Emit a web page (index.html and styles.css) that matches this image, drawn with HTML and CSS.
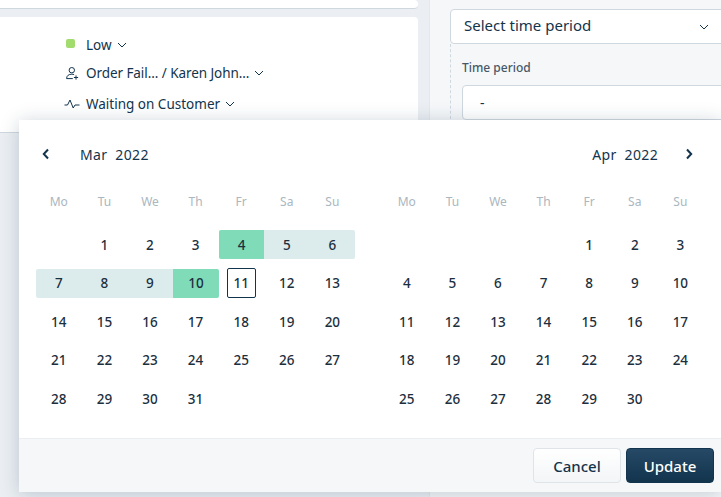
FILE: index.html
```html
<!DOCTYPE html>
<html lang="en">
<head>
<meta charset="utf-8">
<title>Date range picker</title>
<link rel="stylesheet" href="styles.css">
</head>
<body>
<div class="page">
  <main class="main">
    <div class="card card-top"></div>
    <div class="card card-props">
      <div class="prop prop-low">
        <span class="prop-icon"><span class="swatch"></span></span>
        <span>Low</span>
        <svg class="chev" viewBox="0 0 10 6"><path d="M1 1l4 4 4-4"/></svg>
      </div>
      <div class="prop prop-agent">
        <span class="prop-icon">
          <svg class="ico" viewBox="0 0 13 13"><circle cx="5.8" cy="3.2" r="2.7"/><path d="M.6 11.6c0-3 2.2-4.4 5.2-4.4.9 0 1.6.1 2.3.4M.6 11.6h6.2M10 8.4v4.2M7.9 10.5h4.2"/></svg>
        </span>
        <span class="prop-agent-text">Order Fail... / Karen John...</span>
        <svg class="chev" viewBox="0 0 10 6"><path d="M1 1l4 4 4-4"/></svg>
      </div>
      <div class="prop prop-status">
        <span class="prop-icon">
          <svg class="ico ico-wide" viewBox="0 0 16 10"><path d="M.5 6h3L6 1l3.2 8L11 6h4.5"/></svg>
        </span>
        <span>Waiting on Customer</span>
        <svg class="chev" viewBox="0 0 10 6"><path d="M1 1l4 4 4-4"/></svg>
      </div>
    </div>
  </main>
  <aside class="side">
    <div class="select">
      <span>Select time period</span>
      <svg class="chev" viewBox="0 0 10 6"><path d="M1 1l4 4 4-4"/></svg>
    </div>
    <div class="period">
      <div class="period-label">Time period</div>
      <div class="period-input">-</div>
    </div>
  </aside>
</div>

<section class="picker">
  <div class="calendars">
    <div class="month">
      <div class="month-head">
        <svg class="nav" viewBox="0 0 8 12"><path d="M6 1.5L1.8 6 6 10.5"/></svg>
        <span class="month-name">Mar&nbsp; 2022</span>
      </div>
      <div class="grid">
        <div class="dow">Mo</div><div class="dow">Tu</div><div class="dow">We</div><div class="dow">Th</div><div class="dow">Fr</div><div class="dow">Sa</div><div class="dow">Su</div>
        <div class="day"></div><div class="day">1</div><div class="day">2</div><div class="day">3</div><div class="day edge start">4</div><div class="day range">5</div><div class="day range end-row">6</div>
        <div class="day range start-row">7</div><div class="day range">8</div><div class="day range">9</div><div class="day edge end">10</div><div class="day today"><span>11</span></div><div class="day">12</div><div class="day">13</div>
        <div class="day">14</div><div class="day">15</div><div class="day">16</div><div class="day">17</div><div class="day">18</div><div class="day">19</div><div class="day">20</div>
        <div class="day">21</div><div class="day">22</div><div class="day">23</div><div class="day">24</div><div class="day">25</div><div class="day">26</div><div class="day">27</div>
        <div class="day">28</div><div class="day">29</div><div class="day">30</div><div class="day">31</div>
      </div>
    </div>
    <div class="month">
      <div class="month-head month-head-right">
        <span class="month-name">Apr&nbsp; 2022</span>
        <svg class="nav" viewBox="0 0 8 12"><path d="M2 1.5L6.2 6 2 10.5"/></svg>
      </div>
      <div class="grid">
        <div class="dow">Mo</div><div class="dow">Tu</div><div class="dow">We</div><div class="dow">Th</div><div class="dow">Fr</div><div class="dow">Sa</div><div class="dow">Su</div>
        <div class="day"></div><div class="day"></div><div class="day"></div><div class="day"></div><div class="day">1</div><div class="day">2</div><div class="day">3</div>
        <div class="day">4</div><div class="day">5</div><div class="day">6</div><div class="day">7</div><div class="day">8</div><div class="day">9</div><div class="day">10</div>
        <div class="day">11</div><div class="day">12</div><div class="day">13</div><div class="day">14</div><div class="day">15</div><div class="day">16</div><div class="day">17</div>
        <div class="day">18</div><div class="day">19</div><div class="day">20</div><div class="day">21</div><div class="day">22</div><div class="day">23</div><div class="day">24</div>
        <div class="day">25</div><div class="day">26</div><div class="day">27</div><div class="day">28</div><div class="day">29</div><div class="day">30</div>
      </div>
    </div>
  </div>
  <footer class="picker-foot">
    <button class="btn btn-cancel">Cancel</button>
    <button class="btn btn-update">Update</button>
  </footer>
</section>
</body>
</html>
```
FILE: styles.css
```css
* { box-sizing: border-box; }
html, body { margin: 0; height: 100%; }
body {
  width: 721px;
  height: 497px;
  overflow: hidden;
  position: relative;
  background: #ebeff3;
  font-family: "Noto Sans", "Open Sans", sans-serif;
  color: #12344d;
}
.page { display: flex; height: 497px; }
.main { width: 418px; flex: none; }
.card { background: #fff; border-radius: 0 4px 4px 0; border-bottom: 1px solid #cfd7df; }
.card-top { height: 9px; margin-bottom: 8px; }
.card-props { height: 116px; padding: 14px 0 0 64px; font-size: 13.5px; }
.prop { display: flex; align-items: center; height: 28px; white-space: nowrap; }
.prop-agent { margin-bottom: 3px; }
.prop-agent-text { letter-spacing: -.07px; }
.prop-icon { width: 22px; flex: none; display: flex; align-items: center; }
.swatch { width: 9px; height: 9px; border-radius: 2px; background: #a3dc6e; margin: 0 0 4px 2px; }
.ico { width: 13px; height: 13px; margin-left: 2px; fill: none; stroke: #12344d; stroke-width: 1; }
.ico-wide { width: 16px; height: 10px; margin-left: 0; }
.chev { width: 10px; height: 6px; margin-left: 5px; fill: none; stroke: #12344d; stroke-width: 1; }
.side {
  margin-left: 11px;
  flex: 1;
  background: #f5f7f9;
  border-left: 1px solid #e3e8ed;
  padding: 9px 0 0 20px;
  position: relative;
}
.select {
  display: flex;
  justify-content: space-between;
  align-items: center;
  height: 35px;
  background: #fff;
  border: 1px solid #cfd7df;
  border-radius: 4px 0 0 4px;
  padding: 0 12px 3px 13px;
  font-size: 15px;
  width: 272px;
}
.select .chev { margin-top: 3px; }
.period { border-left: 1px dashed #cfd7df; padding: 16px 0 0 11px; height: 80px; }
.period-label { font-size: 12px; font-weight: 500; color: #475867; line-height: 16px; margin-bottom: 9px; }
.period-input {
  height: 35px;
  background: #fff;
  border: 1px solid #cfd7df;
  border-radius: 4px 0 0 4px;
  padding-left: 17px;
  font-size: 14px;
  line-height: 33px;
}
.picker {
  position: absolute;
  left: 19px;
  top: 120px;
  width: 702px;
  height: 372px;
  background: #fff;
  box-shadow: 0 2px 18px rgba(18, 52, 77, .22);
  display: flex;
  flex-direction: column;
}
.calendars { display: flex; justify-content: space-between; flex: 1; padding: 0 17px; }
.month { width: 319px; }
.month-head { display: flex; align-items: center; height: 68px; padding: 0 0 0 6px; gap: 30px; }
.month-head-right { justify-content: flex-end; gap: 27px; padding: 0 11px 0 0; }
.nav { width: 8px; height: 12px; fill: none; stroke: #12344d; stroke-width: 2; flex: none; }
.month-name { font-size: 14px; letter-spacing: .35px; }
.grid { display: grid; grid-template-columns: repeat(7, 45.6px); grid-template-rows: 37.5px; grid-auto-rows: 38.5px; }
.month-head-right + .grid { margin-left: -1px; }
.dow { font-size: 12px; color: #aab6c0; text-align: center; line-height: 27px; height: 27px; align-self: start; }
.day { font-size: 13.5px; font-weight: 500; color: #1c2f3e; display: flex; align-items: center; justify-content: center; height: 29px; align-self: center; }
.edge { background: #7fdbb8; }
.range { background: #dcecec; }
.start { border-radius: 2px 0 0 2px; margin-left: 1px; }
.end { border-radius: 0 2px 2px 0; margin-right: -1px; }
.end-row { border-radius: 0 2px 2px 0; }
.start-row { border-radius: 2px 0 0 2px; }
.today span { display: flex; align-items: center; justify-content: center; width: 29px; height: 30px; border: 1px solid #12344d; border-radius: 2px; margin-top: -1px; }
.picker-foot {
  height: 54px;
  background: #f5f7f9;
  border-top: 1px solid #ebeff3;
  display: flex;
  justify-content: flex-end;
  align-items: center;
  gap: 5px;
  padding-right: 7px;
}
.btn { height: 35px; border-radius: 4px; font-family: inherit; font-size: 15px; font-weight: 500; padding: 0; }
.btn-cancel { width: 88px; border: 1px solid #dfe4e9; background: linear-gradient(#fff, #f3f5f7); color: #12344d; }
.btn-update { width: 88px; border: 1px solid #12344d; background: linear-gradient(#264966, #12344d); color: #fff; }
```
